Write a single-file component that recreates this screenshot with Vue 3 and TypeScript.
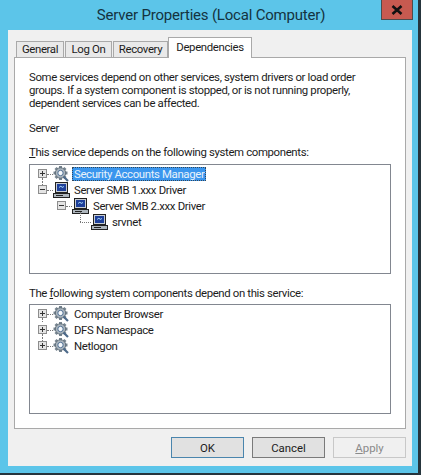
<script setup lang="ts">
interface Row { label: string; depth: number; icon: 'gear' | 'pc'; exp: '+' | '-' | ''; selected?: boolean; stemUp?: boolean; stemDown?: boolean; }
const first: Row[] = [
  { label: 'Security Accounts Manager', depth: 0, icon: 'gear', exp: '+', selected: true, stemDown: true },
  { label: 'Server SMB 1.xxx Driver', depth: 0, icon: 'pc', exp: '-', stemUp: true },
  { label: 'Server SMB 2.xxx Driver', depth: 1, icon: 'pc', exp: '-' },
  { label: 'srvnet', depth: 2, icon: 'pc', exp: '' },
];
const second: Row[] = [
  { label: 'Computer Browser', depth: 0, icon: 'gear', exp: '+', stemDown: true },
  { label: 'DFS Namespace', depth: 0, icon: 'gear', exp: '+', stemUp: true, stemDown: true },
  { label: 'Netlogon', depth: 0, icon: 'gear', exp: '+', stemUp: true },
];
const lists = [
  { id: 'a', rows: first },
  { id: 'b', rows: second },
];
const teeth = [0, 45, 90, 135];
</script>

<template>
  <div class="window">
    <div class="titlebar">
      <span class="title">Server Properties (Local Computer)</span>
      <div class="close">
        <svg width="12" height="10" viewBox="0 0 12 10"><path d="M1.5 1L10.5 9M10.5 1L1.5 9" stroke="#111" stroke-width="2.6" /></svg>
      </div>
    </div>
    <div class="body">
      <div class="tabs">
        <div class="tab tab-general">General</div>
        <div class="tab tab-logon">Log On</div>
        <div class="tab tab-recovery">Recovery</div>
        <div class="tab tab-active">Dependencies</div>
      </div>
      <div class="panel">
        <p class="intro">Some services depend on other services, system drivers or load order<br />groups. If a system component is stopped, or is not running properly,<br />dependent services can be affected.</p>
        <p class="name">Server</p>
        <template v-for="(list, li) in lists" :key="list.id">
          <p :class="li === 0 ? 'cap-a' : 'cap-b'">
            <template v-if="li === 0"><u>T</u>his service depends on the following system components:</template>
            <template v-else>The <u>f</u>ollowing system components depend on this service:</template>
          </p>
          <div class="tree">
            <div v-for="row in list.rows" :key="row.label" class="row" :class="'d' + row.depth">
              <span class="exp-cell" :class="{ up: row.stemUp, down: row.stemDown, elbow: !row.exp }">
                <span v-if="row.exp" class="exp">
                  <svg width="7" height="7" viewBox="0 0 7 7"><path d="M1 3.5H6" stroke="#333" /><path v-if="row.exp === '+'" d="M3.5 1V6" stroke="#333" /></svg>
                </span>
              </span>
              <svg class="icon" width="17" height="17" viewBox="0 0 17 17">
                <template v-if="row.icon === 'gear'">
                  <g transform="translate(7.5 7)">
                    <rect v-for="t in teeth" :key="t" x="-1.5" y="-7" width="3" height="14" fill="#76848f" :transform="`rotate(${t})`" />
                    <circle r="5.2" fill="#aab5be" stroke="#56636f" stroke-width="0.8" />
                    <circle r="2.7" fill="#f6f9fc" stroke="#4f6f93" stroke-width="1" />
                  </g>
                  <path d="M10.5 10.5L15 15" stroke="#4d6a8a" stroke-width="2.2" />
                </template>
                <template v-else>
                  <rect x="2.5" y="0.5" width="12" height="10" fill="#c8ced4" stroke="#222" />
                  <rect x="4" y="2" width="9" height="7" fill="#1d3f9a" />
                  <path d="M6 5.5l2-1.5 1 1.5 2-1" stroke="#9fd0f5" fill="none" />
                  <rect x="0.5" y="11.5" width="16" height="4" fill="#aeb6bd" stroke="#222" />
                  <path d="M3 13.5H10" stroke="#222" />
                </template>
              </svg>
              <span class="label" :class="{ selected: row.selected }">{{ row.label }}</span>
            </div>
          </div>
        </template>
      </div>
      <div class="buttons">
        <button class="btn btn-default">OK</button>
        <button class="btn">Cancel</button>
        <button class="btn btn-disabled"><u>A</u>pply</button>
      </div>
    </div>
  </div>
</template>

<style>
html, body { margin: 0; background: #5cc5e9; }
</style>

<style scoped>
.window {
  width: 421px;
  height: 475px;
  box-sizing: border-box;
  background: #5cc5e9;
  border-right: 3px solid #26353d;
  border-bottom: 2px solid #26353d;
  padding: 0 6px 7px 8px;
  display: flex;
  flex-direction: column;
  font-family: Roboto, "Open Sans", sans-serif;
  color: #1c1c1c;
  font-size: 11.4px;
  letter-spacing: -0.36px;
  overflow: hidden;
}
.titlebar {
  height: 30px;
  flex: none;
  position: relative;
  display: flex;
  align-items: flex-start;
  justify-content: center;
}
.title {
  font-size: 15px;
  letter-spacing: -0.2px;
  line-height: 30px;
  color: #14333f;
  margin-right: -2px;
  white-space: nowrap;
}
.close {
  position: absolute;
  top: 0;
  right: -1px;
  width: 32px;
  height: 20px;
  box-sizing: border-box;
  background: #c75a50;
  border: 1px solid #4c4c4c;
  border-top: none;
  display: flex;
  align-items: center;
  justify-content: center;
}
.body {
  flex: 1;
  background: #f0f0f0;
  padding: 7px 6px 0 6px;
  display: flex;
  flex-direction: column;
}
.tabs {
  display: flex;
  align-items: flex-end;
  height: 20px;
  padding-left: 2px;
  position: relative;
  z-index: 1;
}
.tab {
  box-sizing: border-box;
  height: 16px;
  background: #e9e9e9;
  border: 1px solid #a9a9a9;
  border-bottom: none;
  text-align: center;
  line-height: 15px;
  margin-right: 1px;
}
.tab-general { width: 48px; }
.tab-logon { width: 47px; }
.tab-recovery { width: 55px; margin-right: 0; }
.tab-active {
  width: 84px;
  height: 21px;
  margin-bottom: -1px;
  background: #fff;
  line-height: 19px;
}
.panel {
  box-sizing: border-box;
  height: 372px;
  flex: none;
  background: #fff;
  border: 1px solid #a9a9a9;
  padding: 0 14px 0 14px;
}
p { margin: 0; line-height: 13px; white-space: nowrap; }
.intro { padding-top: 13px; }
.name { margin-top: 12px; }
.cap-a { margin-top: 11px; }
.cap-b { margin-top: 13px; }
.tree {
  box-sizing: border-box;
  height: 110px;
  margin-top: 5px;
  border: 1px solid #828790;
  padding: 1px 0 0 8px;
  background: #fff;
}
.cap-b + .tree { margin-top: 4px; }
.row {
  display: flex;
  align-items: center;
  height: 16px;
}
.d1 { margin-left: 19px; }
.d2 { margin-left: 38px; }
.exp-cell {
  width: 15px;
  height: 16px;
  flex: none;
  position: relative;
  display: block;
}
.exp-cell::before {
  content: "";
  position: absolute;
  left: 9px;
  top: 8px;
  width: 6px;
  border-top: 1px dotted #777;
}
.exp {
  position: absolute;
  left: 0;
  top: 3px;
  width: 9px;
  height: 9px;
  box-sizing: border-box;
  background: #e4e4e4;
  border: 1px solid #8d8d8d;
  display: flex;
  align-items: center;
  justify-content: center;
  z-index: 1;
}
.exp svg { flex: none; }
.up::after, .down::after, .elbow::after {
  content: "";
  position: absolute;
  left: 4px;
  border-left: 1px dotted #777;
}
.up::after { top: 0; height: 3px; }
.down::after { top: 12px; height: 4px; }
.elbow::before { left: 4px; width: 11px; }
.elbow::after { top: -2px; height: 10px; }
.icon { flex: none; }
.label {
  margin-left: 2px;
  padding: 0 2px;
  line-height: 14px;
  height: 14px;
  white-space: nowrap;
  border: 0;
}
.selected {
  background: #3a96ee;
  color: #e8f2fb;
  outline: 1px dotted #33475a;
  outline-offset: -1px;
}
.buttons {
  display: flex;
  justify-content: flex-end;
  gap: 8px;
  margin-top: 8px;
}
.btn {
  box-sizing: border-box;
  width: 73px;
  height: 21px;
  padding: 0;
  background: #e1e1e1;
  border: 1px solid #7a7a7a;
  font: inherit;
  color: #1c1c1c;
}
.btn-default { border-color: #4a85ad; }
.btn-disabled {
  background: #f0f0f0;
  border-color: #c8c8c8;
  color: #8a8a8a;
}
</style>
